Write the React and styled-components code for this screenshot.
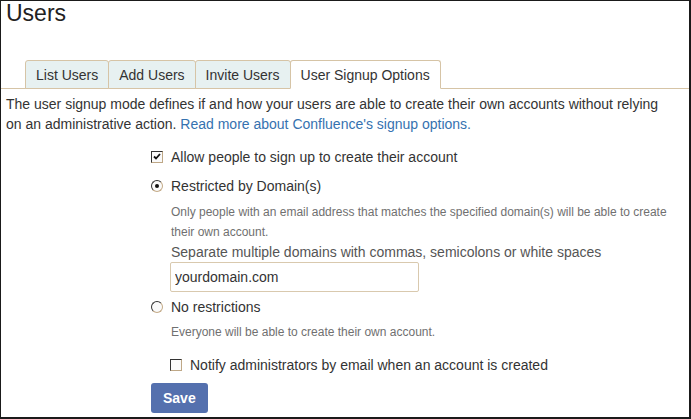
import React from "react";
import styled, { createGlobalStyle } from "styled-components";

const GlobalStyle = createGlobalStyle`
  html, body {
    margin: 0;
    padding: 0;
    background: #fff;
  }
  body {
    font-family: "Liberation Sans", Arial, sans-serif;
    color: #333;
  }
`;

const Page = styled.div`
  box-sizing: border-box;
  width: 691px;
  height: 419px;
  border: 1px solid #1a1a1a;
  border-right-width: 2px;
  border-bottom-width: 2px;
  overflow: hidden;
`;

const Title = styled.h1`
  margin: 0;
  padding-left: 5px;
  font-size: 23px;
  font-weight: normal;
  line-height: 24px;
  color: #222;
`;

const TabBar = styled.div`
  display: flex;
  margin-top: 35px;
  padding-left: 24px;
  height: 28px;
  border-bottom: 1px solid #d6c4a6;
`;

const Tab = styled.div`
  box-sizing: border-box;
  height: 29px;
  margin-bottom: -1px;
  padding: 0 10px;
  display: flex;
  align-items: center;
  font-size: 14px;
  color: #333;
  border: 1px solid #d6c4a6;
  border-bottom-color: ${(p) => (p.$active ? "#fff" : "#d6c4a6")};
  border-radius: 3px 3px 0 0;
  background: ${(p) => (p.$active ? "#fff" : "#e7f1f1")};
  & + & {
    margin-left: -1px;
  }
`;

const Intro = styled.div`
  margin-top: 5px;
  padding: 0 14px 0 5px;
  font-size: 14px;
  line-height: 20px;
  color: #333;
`;

const Link = styled.a`
  color: #3572b0;
  text-decoration: none;
`;

const Form = styled.div`
  display: flex;
  flex-direction: column;
  align-items: flex-start;
  padding-left: 150px;
  margin-top: 13px;
`;

const Row = styled.label`
  display: flex;
  align-items: center;
  gap: 8px;
  height: 20px;
  margin-top: ${(p) => p.$mt || 0}px;
  margin-left: ${(p) => p.$indent || 0}px;
  font-size: 14px;
  color: #333;
`;

const Box = styled.span`
  box-sizing: border-box;
  width: 12px;
  height: 12px;
  border: 1px solid;
  border-color: #333 #bfa887 #bfa887 #333;
  background: #fafafa;
  display: flex;
  align-items: center;
  justify-content: center;
`;

const Radio = styled.span`
  position: relative;
  box-sizing: border-box;
  width: 12px;
  height: 12px;
  border-radius: 50%;
  border: 1px solid;
  border-color: #333 #c4ab88 #c4ab88 #333;
  background: #fafafa;
  &::after {
    content: "";
    display: ${(p) => (p.$checked ? "block" : "none")};
    position: absolute;
    left: 3px;
    top: 3px;
    width: 4px;
    height: 4px;
    border-radius: 50%;
    background: #111;
  }
`;

const Help = styled.div`
  margin-top: ${(p) => p.$mt || 0}px;
  padding-left: 20px;
  font-size: 12px;
  line-height: 20px;
  color: #707070;
`;

const Hint = styled.div`
  padding-left: 20px;
  font-size: 14px;
  line-height: 20px;
  color: #555;
`;

const Input = styled.input`
  box-sizing: border-box;
  margin-left: 19px;
  width: 249px;
  height: 30px;
  padding: 0 4px;
  border: 1px solid #d9c9ae;
  border-radius: 2px;
  font-family: "Liberation Sans", Arial, sans-serif;
  font-size: 14px;
  color: #333;
  background: #fff;
  outline: none;
`;

const SaveButton = styled.button`
  margin-top: 8px;
  height: 30px;
  padding: 0 12px;
  border: none;
  border-radius: 3px;
  background: #5470ae;
  color: #fff;
  font-family: "Liberation Sans", Arial, sans-serif;
  font-size: 14px;
  font-weight: bold;
`;

const Check = ({ checked }) => (
  <Box>
    {checked && (
      <svg width="8" height="8" viewBox="0 0 8 8">
        <path d="M1 3.5 L3 5.5 L7 1" fill="none" stroke="#111" strokeWidth="1.8" />
      </svg>
    )}
  </Box>
);

const tabs = ["List Users", "Add Users", "Invite Users", "User Signup Options"];

export default function App() {
  return (
    <>
      <GlobalStyle />
      <Page>
        <Title>Users</Title>
        <TabBar>
          {tabs.map((t, i) => (
            <Tab key={t} $active={i === 3}>
              {t}
            </Tab>
          ))}
        </TabBar>
        <Intro>
          The user signup mode defines if and how your users are able to create their own accounts without relying
          on an administrative action. <Link href="#">Read more about Confluence's signup options.</Link>
        </Intro>
        <Form>
          <Row>
            <Check checked />
            Allow people to sign up to create their account
          </Row>
          <Row $mt={9}>
            <Radio $checked />
            Restricted by Domain(s)
          </Row>
          <Help $mt={6}>
            Only people with an email address that matches the specified domain(s) will be able to create their own
            account.
          </Help>
          <Hint>Separate multiple domains with commas, semicolons or white spaces</Hint>
          <Input defaultValue="yourdomain.com" />
          <Row $mt={5}>
            <Radio />
            No restrictions
          </Row>
          <Help $mt={5}>Everyone will be able to create their own account.</Help>
          <Row $mt={13} $indent={19}>
            <Check />
            Notify administrators by email when an account is created
          </Row>
          <SaveButton>Save</SaveButton>
        </Form>
      </Page>
    </>
  );
}
